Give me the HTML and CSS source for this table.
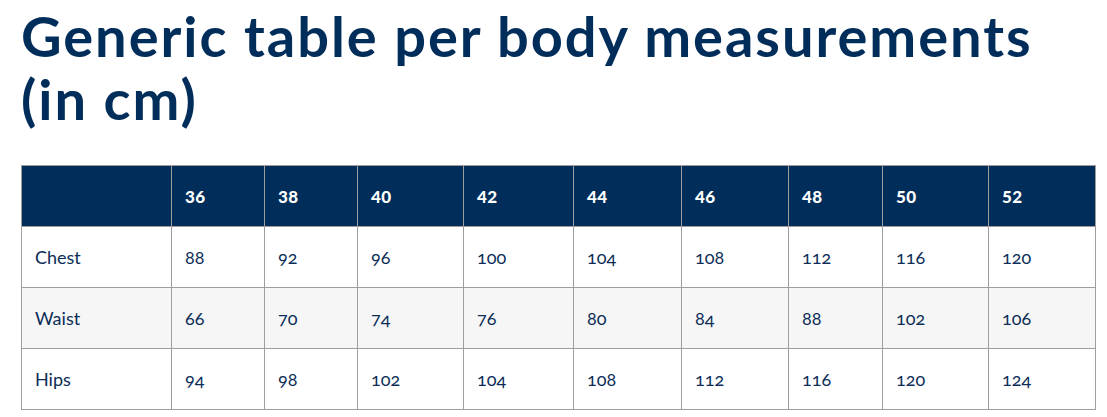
FILE: index.html
```html
<!DOCTYPE html>
<html lang="en">
<head>
<meta charset="utf-8">
<title>Generic table per body measurements</title>
<link rel="stylesheet" href="styles.css">
</head>
<body>
<main class="page">
  <h1 class="title">Generic table per body measurements (in cm)</h1>
  <table class="size-table">
    <colgroup>
      <col class="c-label">
      <col class="c-93">
      <col class="c-93">
      <col class="c-106">
      <col class="c-110">
      <col class="c-108">
      <col class="c-107">
      <col class="c-94">
      <col class="c-106">
      <col class="c-107">
    </colgroup>
    <thead>
      <tr>
        <th></th>
        <th>36</th><th>38</th><th>40</th><th>42</th><th>44</th><th>46</th><th>48</th><th>50</th><th>52</th>
      </tr>
    </thead>
    <tbody>
      <tr>
        <td>Chest</td>
        <td>88</td><td>92</td><td>96</td><td>100</td><td>104</td><td>108</td><td>112</td><td>116</td><td>120</td>
      </tr>
      <tr class="alt">
        <td>Waist</td>
        <td>66</td><td>70</td><td>74</td><td>76</td><td>80</td><td>84</td><td>88</td><td>102</td><td>106</td>
      </tr>
      <tr>
        <td>Hips</td>
        <td>94</td><td>98</td><td>102</td><td>104</td><td>108</td><td>112</td><td>116</td><td>120</td><td>124</td>
      </tr>
    </tbody>
  </table>
</main>
</body>
</html>
```
FILE: styles.css
```css
html, body {
  margin: 0;
  padding: 0;
  background: #ffffff;
}

body {
  font-family: Lato, "Open Sans", "Liberation Sans", sans-serif;
  color: #0b2d57;
}

.page {
  padding: 4px 21px 0 21px;
}

.title {
  margin: 0;
  font-size: 56px;
  line-height: 63px;
  font-weight: 700;
  letter-spacing: 1.95px;
  color: #002d5a;
  max-width: 1040px;
}

.size-table {
  margin-top: 35px;
  border-collapse: collapse;
  table-layout: fixed;
  width: 1075px;
  border: 1px solid #9e9e9e;
}

.c-label { width: 150px; }
.c-93 { width: 93px; }
.c-94 { width: 94px; }
.c-106 { width: 106px; }
.c-107 { width: 107px; }
.c-108 { width: 108px; }
.c-110 { width: 110px; }

.size-table th,
.size-table td {
  border: 1px solid #9e9e9e;
  text-align: left;
  padding: 20px 13px;
  line-height: 20px;
}

.size-table th {
  background: #002d5a;
  color: #ffffff;
  font-size: 17px;
  font-weight: 900;
  letter-spacing: 0.3px;
  padding-top: 21px;
  padding-bottom: 19px;
}

.size-table td {
  font-size: 18px;
  font-weight: 400;
  font-variant-numeric: oldstyle-nums;
  color: #0b2d57;
}

.size-table tr.alt td {
  background: #f6f6f6;
}
```
